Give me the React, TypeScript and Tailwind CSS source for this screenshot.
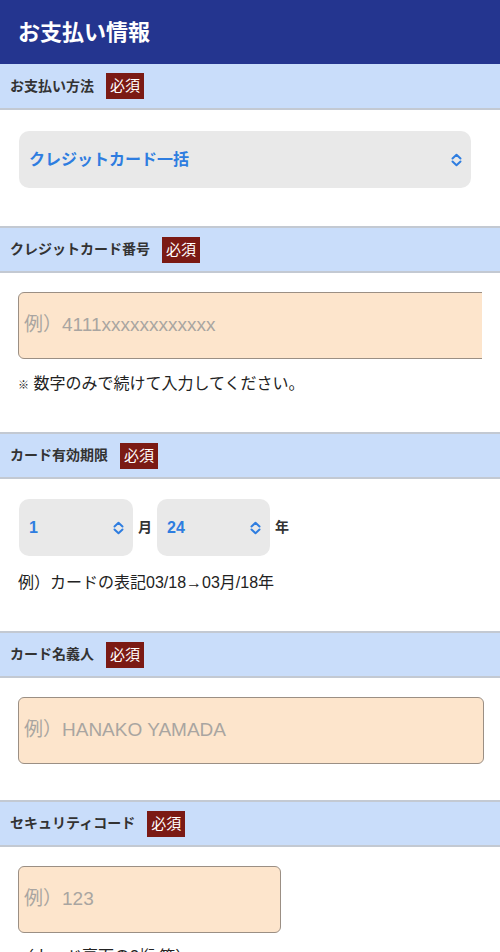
import type { ReactNode } from "react"

const font = { fontFamily: '"Liberation Sans", "Noto Sans CJK JP", sans-serif' }

function UpDown() {
  return (
    <svg width="11" height="14" viewBox="0 0 11 14" fill="none" className="text-[#2e7de0]">
      <path d="M1.5 5.5 L5.5 1.8 L9.5 5.5" stroke="currentColor" strokeWidth="2" strokeLinecap="round" strokeLinejoin="round" />
      <path d="M1.5 8.5 L5.5 12.2 L9.5 8.5" stroke="currentColor" strokeWidth="2" strokeLinecap="round" strokeLinejoin="round" />
    </svg>
  )
}

function SectionHead({ label, first }: { label: string; first?: boolean }) {
  return (
    <div
      className={`flex items-center gap-[12px] border-b-2 border-[#c3c9d2] bg-[#c9ddfa] pl-[10px] ${
        first ? "h-[46px]" : "h-[47px] border-t-2"
      }`}
    >
      <span className="text-[14px] font-bold text-[#333333]">{label}</span>
      <span className="bg-[#7b1a14] px-[4px] py-[1px] text-[15px] leading-[24px] text-white">必須</span>
    </div>
  )
}

function Select({ value, className }: { value: string; className: string }) {
  return (
    <div className={`flex h-[57px] items-center justify-between rounded-[10px] bg-[#e9e9e9] pl-[10px] pr-[9px] ${className}`}>
      <span className="text-[16px] font-bold text-[#2e7de0]">{value}</span>
      <UpDown />
    </div>
  )
}

function Field({ placeholder, className }: { placeholder: string; className: string }) {
  return (
    <div
      className={`flex h-[67px] items-center rounded-[6px] border border-[#9b8f84] bg-[#fde5cc] pl-[5px] text-[19px] text-[#a9a5a1] ${className}`}
    >
      {placeholder}
    </div>
  )
}

function Body({ children, className }: { children: ReactNode; className: string }) {
  return <div className={`bg-white px-[18px] ${className}`}>{children}</div>
}

export default function App() {
  return (
    <div className="h-[952px] w-[500px] overflow-hidden bg-white" style={font}>
      {/* Page title */}
      <div className="flex h-[64px] items-center bg-[#24358f] pl-[18px]">
        <h1 className="text-[22px] font-bold text-white">お支払い情報</h1>
      </div>

      <SectionHead label="お支払い方法" first />
      <Body className="h-[116px] pt-[21px]">
        <Select value="クレジットカード一括" className="ml-[1px] w-[452px]" />
      </Body>

      <SectionHead label="クレジットカード番号" />
      <Body className="h-[159px] overflow-hidden pt-[19px]">
        <div className="overflow-hidden">
          <Field placeholder="例）4111xxxxxxxxxxxx" className="w-[520px]" />
        </div>
        <p className="mt-[13px] text-[16px] leading-[24px] text-[#222222]">
          <span className="text-[11px]">※</span> 数字のみで続けて入力してください。
        </p>
      </Body>

      <SectionHead label="カード有効期限" />
      <Body className="h-[152px] pt-[20px]">
        <div className="flex items-center">
          <Select value="1" className="ml-[1px] w-[114px]" />
          <span className="mx-[5px] text-[14px] font-bold text-[#333333]">月</span>
          <Select value="24" className="w-[113px]" />
          <span className="ml-[5px] text-[14px] font-bold text-[#333333]">年</span>
        </div>
        <p className="mt-[15px] text-[16px] leading-[24px] text-[#222222]">例）カードの表記03/18→03月/18年</p>
      </Body>

      <SectionHead label="カード名義人" />
      <Body className="h-[122px] pt-[19px]">
        <Field placeholder="例）HANAKO YAMADA" className="w-[466px]" />
      </Body>

      <SectionHead label="セキュリティコード" />
      <Body className="pt-[19px]">
        <Field placeholder="例）123" className="w-[263px]" />
        <p className="mt-[12px] text-[16px] leading-[24px] text-[#222222]">（カード裏面の3桁 等）</p>
      </Body>
    </div>
  )
}
